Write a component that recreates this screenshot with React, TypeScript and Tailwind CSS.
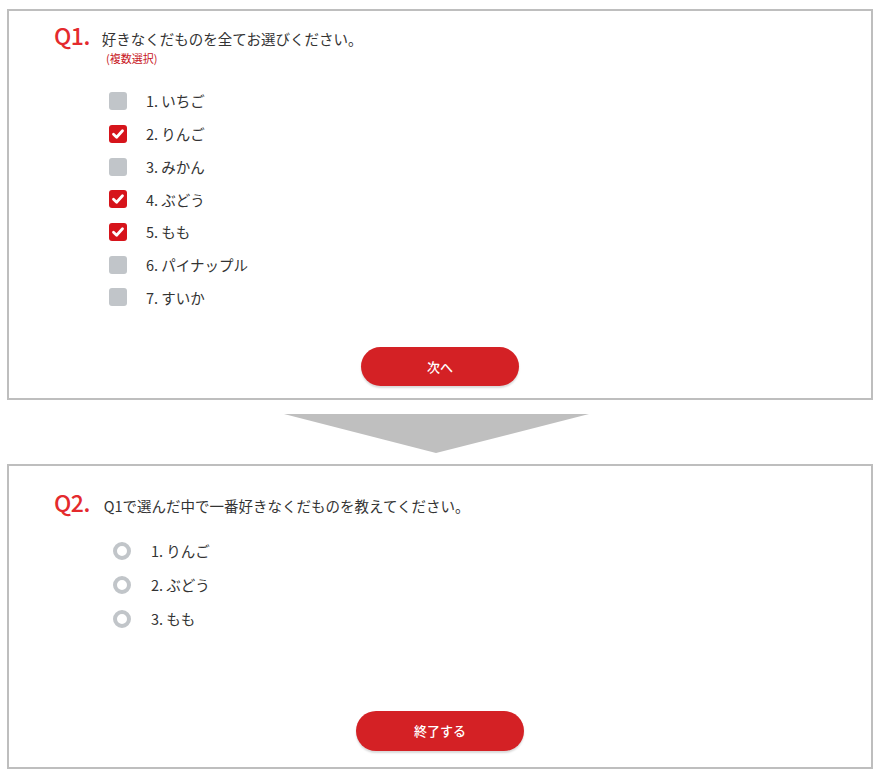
const fruits = [
  { label: '1. いちご', checked: false },
  { label: '2. りんご', checked: true },
  { label: '3. みかん', checked: false },
  { label: '4. ぶどう', checked: true },
  { label: '5. もも', checked: true },
  { label: '6. パイナップル', checked: false },
  { label: '7. すいか', checked: false },
];

const favorites = ['1. りんご', '2. ぶどう', '3. もも'];

const font = { fontFamily: '"Noto Sans CJK JP", "Noto Sans", sans-serif' };

const CheckBox = ({ checked }: { checked: boolean }) => (
  <span className={`w-[18px] h-[18px] rounded-[3px] flex items-center justify-center shrink-0 ${checked ? 'bg-[#d6141b]' : 'bg-[#c1c5c9]'}`}>
    {checked && (
      <svg width="14" height="14" viewBox="0 0 14 14">
        <path d="M2.5 7.3 L5.6 10.2 L11.5 3.8" fill="none" stroke="#fff" strokeWidth="2.8" strokeLinecap="round" strokeLinejoin="round" />
      </svg>
    )}
  </span>
);

export default function App() {
  return (
    <div className="w-[877px] h-[777px] bg-white px-[7px] pt-[9px] text-[#333]" style={font}>
      {/* Q1 */}
      <section className="h-[391px] w-[866px] border-2 border-[#bebebe] flex flex-col">
        <div className="flex items-baseline pl-[45px] pt-[8px]">
          <span className="text-[23px] font-medium text-[#e42a2d] leading-[32px] tracking-[-0.5px]">Q1.</span>
          <span className="ml-[12px] text-[14.5px] leading-[32px]">好きなくだものを全てお選びください。</span>
        </div>
        <div className="pl-[97px] text-[11px] leading-[14px] text-[#c8161d] -mt-[4px]">(複数選択)</div>

        <ul className="pl-[100px] mt-[20px] flex flex-col">
          {fruits.map(f => (
            <li key={f.label} className="h-[32.7px] flex items-center gap-[19px]">
              <CheckBox checked={f.checked} />
              <span className="text-[14.5px]">{f.label}</span>
            </li>
          ))}
        </ul>

        <div className="flex justify-center mt-auto mb-[12px]">
          <button className="w-[158px] h-[39px] rounded-full bg-[#d42125] shadow-[0_2px_2px_rgba(0,0,0,0.15)] text-white text-[13px] font-medium">
            次へ
          </button>
        </div>
      </section>

      {/* arrow */}
      <div className="mt-[14px] mb-[11px] pl-[277px]">
        <svg width="305" height="39" viewBox="0 0 305 39" className="block">
          <polygon points="0,0 305,0 152,39" fill="#bfbfbf" />
        </svg>
      </div>

      {/* Q2 */}
      <section className="h-[305px] w-[866px] border-2 border-[#bebebe] flex flex-col">
        <div className="flex items-baseline pl-[45px] pt-[20px]">
          <span className="text-[23px] font-medium text-[#e42a2d] leading-[32px] tracking-[-0.5px]">Q2.</span>
          <span className="ml-[14px] text-[14.5px] leading-[32px]">Q1で選んだ中で一番好きなくだものを教えてください。</span>
        </div>

        <ul className="pl-[104px] mt-[12px] flex flex-col">
          {favorites.map(f => (
            <li key={f} className="h-[34px] flex items-center gap-[20px]">
              <span className="w-[18px] h-[18px] rounded-full border-[4px] border-[#c1c5c9] shrink-0" />
              <span className="text-[14.5px]">{f}</span>
            </li>
          ))}
        </ul>

        <div className="flex justify-center mt-auto mb-[16px]">
          <button className="w-[168px] h-[40px] rounded-full bg-[#d42125] shadow-[0_2px_2px_rgba(0,0,0,0.15)] text-white text-[13px] font-medium">
            終了する
          </button>
        </div>
      </section>
    </div>
  );
}
